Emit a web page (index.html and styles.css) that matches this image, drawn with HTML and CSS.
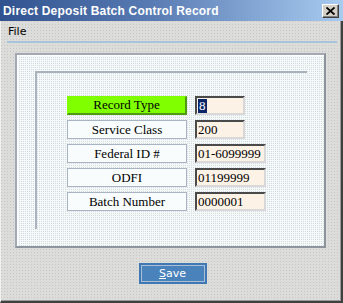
FILE: index.html
```html
<!DOCTYPE html>
<html lang="en">
<head>
  <meta charset="UTF-8" />
  <title>Direct Deposit Batch Control Record</title>
  <link rel="stylesheet" href="styles.css">
</head>
<body>
  <div class="window">
    <div class="titlebar">
      <span class="title">Direct Deposit Batch Control Record</span>
      <button class="close" title="Close">
        <svg width="9" height="8" viewBox="0 0 9 8"><path d="M0.5 0.5 L8.5 7.5 M8.5 0.5 L0.5 7.5" stroke="#000" stroke-width="1.8" fill="none"/></svg>
      </button>
    </div>
    <div class="frame">
      <div class="menubar"><span class="menu-item">File</span></div>
      <div class="rule"></div>

      <div class="panel">
        <div class="group">
          <div class="row">
            <div class="label active">Record Type</div>
            <div class="field narrow"><span class="sel">8</span></div>
          </div>
          <div class="row">
            <div class="label">Service Class</div>
            <div class="field narrow">200</div>
          </div>
          <div class="row">
            <div class="label">Federal ID #</div>
            <div class="field">01-6099999</div>
          </div>
          <div class="row">
            <div class="label">ODFI</div>
            <div class="field">01199999</div>
          </div>
          <div class="row">
            <div class="label">Batch Number</div>
            <div class="field">0000001</div>
          </div>
        </div>
      </div>

      <div class="actions">
        <button class="save"><u>S</u>ave</button>
      </div>
    </div>
  </div>
</body>
</html>
```
FILE: styles.css
```css
body {
  margin: 0;
  font-family: "DejaVu Sans", sans-serif;
  background: #dcdcda;
}
.window {
  width: 343px;
  height: 303px;
  display: flex;
  flex-direction: column;
}
.titlebar {
  height: 21px;
  display: flex;
  align-items: center;
  justify-content: space-between;
  padding: 0 4px 0 3px;
  box-sizing: border-box;
  background: linear-gradient(to right, #30528f, #5a7cb4 45%, #a8cbf0);
}
.title {
  color: #fff;
  font-family: "Liberation Sans", sans-serif;
  font-weight: bold;
  font-size: 12px;
  letter-spacing: 0.2px;
}
.close {
  width: 17px;
  height: 14px;
  padding: 0;
  margin-top: 1px;
  display: flex;
  align-items: center;
  justify-content: center;
  background: #d4d0c8;
  border: 1px solid;
  border-color: #fff #404040 #404040 #fff;
  box-shadow: inset -1px -1px 0 #808080;
}
.frame {
  flex: 1;
  display: flex;
  flex-direction: column;
  background: conic-gradient(at 1px 1px, transparent 75%, #c6c6c4 0) 0 0 / 3px 3px, #dcdcda;
  border-left: 1px solid #f4f4ee;
  border-right: 2px solid #404040;
  border-bottom: 2px solid #404040;
  box-shadow: inset -1px -1px 0 #9a9a9a;
}
.menubar {
  height: 20px;
  display: flex;
  align-items: center;
  padding-left: 7px;
  font-size: 11px;
  color: #000;
}
.rule {
  height: 2px;
  margin: 0 4px 0 6px;
  background: #a8c4da;
}
.panel {
  margin: 10px 15px 0 14px;
  height: 195px;
  box-sizing: border-box;
  background: conic-gradient(at 1px 1px, transparent 75%, #d2dcde 0) 0 0 / 2px 2px, #f6f9f9;
  border: 2px solid;
  border-color: #a2a9b2 #8e949c #8e949c #a2a9b2;
  box-shadow: inset 1px 1px 0 #fff;
}
.group {
  margin: 16px 0 0 18px;
  width: 272px;
  height: 158px;
  box-sizing: border-box;
  border-top: 2px solid #aab2bd;
  border-left: 2px solid #aab2bd;
  padding: 23px 0 0 30px;
  display: flex;
  flex-direction: column;
  gap: 5px;
}
.row {
  display: flex;
  gap: 8px;
  height: 19px;
}
.label {
  width: 120px;
  box-sizing: border-box;
  display: flex;
  align-items: center;
  justify-content: center;
  background: #f8fcfc;
  border: 1px solid #a9b4c2;
  font-family: "Liberation Serif", serif;
  font-size: 13px;
  color: #000;
}
.label.active {
  background: #80ff00;
  border-color: #80ff00 #4f9a10 #4f9a10 #80ff00;
  border-width: 1px 2px 2px 1px;
}
.field {
  width: 71px;
  box-sizing: border-box;
  display: flex;
  align-items: center;
  padding-left: 1px;
  background: #fdf2e6;
  border: 2px solid;
  border-color: #4a4a4a #d8d8d8 #d8d8d8 #4a4a4a;
  font-family: "Liberation Serif", serif;
  font-size: 13px;
  color: #000;
}
.field.narrow {
  width: 50px;
}
.sel {
  background: #0a246a;
  color: #fff;
  padding: 0 1px;
  line-height: 14px;
}
.actions {
  display: flex;
  justify-content: center;
  padding: 15px 0 0 3px;
}
.save {
  width: 68px;
  height: 21px;
  padding: 0;
  background: #4a82bc;
  border: 2px solid #4078b4;
  box-shadow: inset 0 0 0 1px #a9bed6;
  color: #fff;
  font-family: "DejaVu Sans", sans-serif;
  font-size: 11px;
}
```
